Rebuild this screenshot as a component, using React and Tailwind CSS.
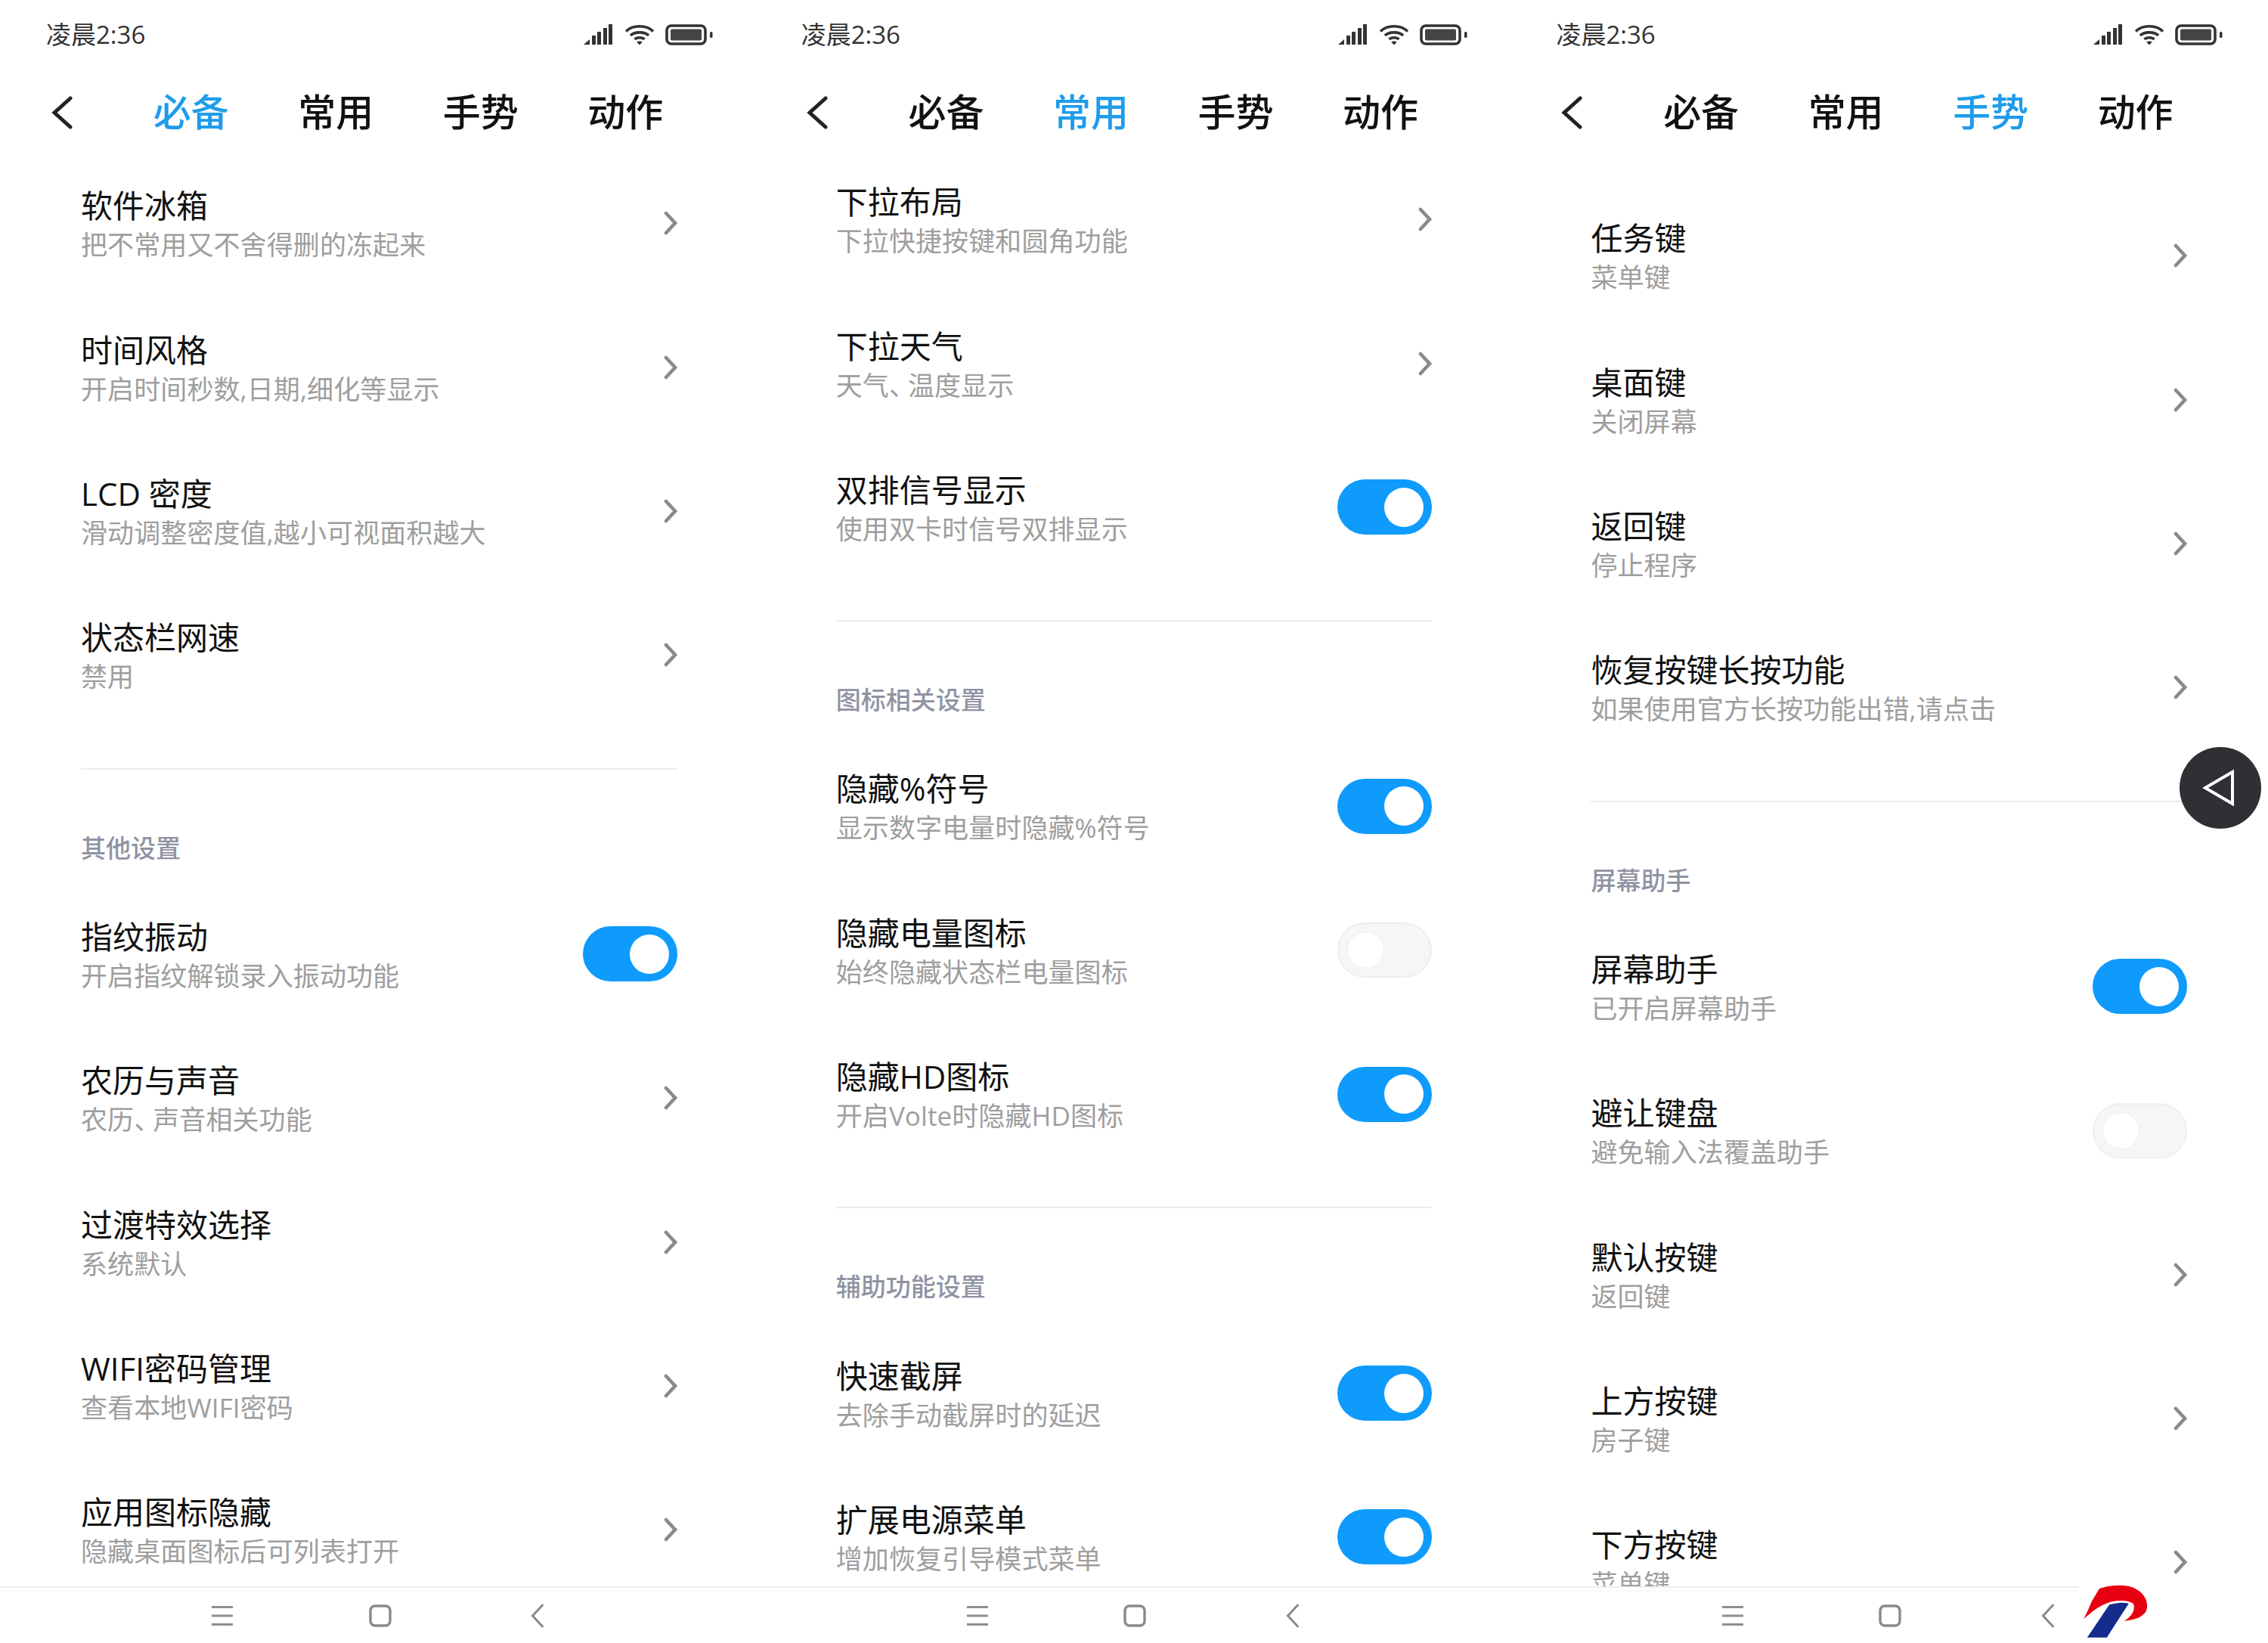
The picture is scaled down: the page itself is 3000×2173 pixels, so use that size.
const FONT = "font-['Open_Sans','Noto_Sans_CJK_SC','Noto_Sans',sans-serif]";

function Signal() {
  return (
    <svg width="40" height="28" viewBox="0 0 40 28" className="text-[#333]" fill="currentColor">
      <path d="M0 27 L8 20 V27 Z" />
      <rect x="11" y="15" width="5" height="12" />
      <rect x="18" y="10" width="5" height="17" />
      <rect x="26" y="5" width="5" height="22" />
      <rect x="33" y="0" width="5" height="27" />
    </svg>
  );
}
function Wifi() {
  return (
    <svg width="40" height="28" viewBox="0 0 40 28" fill="none" stroke="#333" strokeWidth="3.6" className="ml-[14px]">
      <path d="M2 9.5 C11 0.5 29 0.5 38 9.5" />
      <path d="M8 15 C13 9.5 27 9.5 32 15" />
      <path d="M13.5 20 C16.5 17 23.5 17 26.5 20" />
      <path d="M20 27.5 L16.2 23.5 C18 22 22 22 23.8 23.5 Z" fill="#333" stroke="none" />
    </svg>
  );
}
function Battery() {
  return (
    <svg width="63" height="28" viewBox="0 0 63 28" className="ml-[14px]">
      <rect x="2" y="2" width="51" height="24" rx="6" fill="none" stroke="#333" strokeWidth="3.6" />
      <rect x="7" y="6.5" width="41" height="15" rx="2" fill="#444" />
      <rect x="59" y="10" width="3.5" height="8" rx="1.5" fill="#333" />
    </svg>
  );
}

function Chevron() {
  return (
    <svg width="18" height="32" viewBox="0 0 18 32" fill="none" stroke="#8a8a8a" strokeWidth="4.6" strokeLinecap="round" strokeLinejoin="miter">
      <path d="M3 3 L15 16 L3 29" />
    </svg>
  );
}

function Toggle({ on }) {
  if (on) {
    return (
      <div className="w-[125px] h-[73px] rounded-full bg-[#0f9bfb] flex items-center justify-end pr-[11px]">
        <div className="w-[52px] h-[52px] rounded-full bg-white" />
      </div>
    );
  }
  return (
    <div className="w-[125px] h-[73px] rounded-full bg-[#f6f6f6] border-2 border-[#eeeeee] flex items-center pl-[11px]">
      <div className="w-[49px] h-[49px] rounded-full bg-white border border-[#eeeeee]" />
    </div>
  );
}

function Row({ title, sub, toggle }) {
  return (
    <div className="h-[190.4px] shrink-0 pl-[107px] pr-[103px] flex items-center justify-between">
      <div className="flex flex-col mt-[6px]">
        <div className="text-[42px] leading-[52px] text-[#111]">{title}</div>
        <div className="text-[35px] leading-[52px] text-[#9e9e9e] tracking-[0.1px]">{sub}</div>
      </div>
      {toggle === undefined ? <Chevron /> : <Toggle on={toggle} />}
    </div>
  );
}

function Section({ title, children }) {
  return (
    <>
      <div className="h-[2px] mt-[54px] ml-[107px] mr-[103px] bg-[#ececec] shrink-0" />
      <div className="h-[149px] pt-[80px] pl-[107px] text-[33px] leading-[48px] font-medium text-[#8f93a3] shrink-0">{title}</div>
      {children}
    </>
  );
}

function Phone({ active, offset, children }) {
  const tabs = ["必备", "常用", "手势", "动作"];
  return (
    <div className="w-[998.7px] h-[2173px] shrink-0 flex flex-col bg-white">
      <div className="h-[100px] shrink-0 pl-[61px] pr-[56px] pb-[8px] flex items-center justify-between">
        <span className="text-[33px] leading-[40px] text-[#333]">凌晨2:36</span>
        <div className="flex items-center">
          <Signal />
          <Wifi />
          <Battery />
        </div>
      </div>
      <div className="h-[98px] shrink-0 pl-[68px] flex items-center">
        <svg width="28" height="44" viewBox="0 0 28 44" fill="none" stroke="#222" strokeWidth="5" strokeLinecap="round" className="mr-[61px]">
          <path d="M25 3 L4 22 L25 41" />
        </svg>
        {tabs.map((t) => (
          <div key={t} className={`w-[191.5px] text-center text-[50px] leading-[60px] font-medium -mt-[2px] ${t === active ? "text-[#1f9cea]" : "text-[#111]"}`}>
            {t}
          </div>
        ))}
      </div>
      <div className="flex-1 min-h-0 overflow-hidden">
        <div className={`flex flex-col ${offset}`}>{children}</div>
      </div>
      <div className="h-[75px] shrink-0 border-t-2 border-[#eeeeee] relative">
        <div className="h-[2px] mt-[3px] bg-[#f8f8f8]" />
        <div className="absolute inset-0 pl-[190px] flex items-center">
          <div className="w-[208.5px] flex justify-center">
            <svg width="30" height="28" viewBox="0 0 30 28" stroke="#8f8f8f" strokeWidth="3" fill="none">
              <path d="M1 2.5 H29 M1 14 H29 M1 25.5 H29" />
            </svg>
          </div>
          <div className="w-[208.5px] flex justify-center">
            <svg width="30" height="30" viewBox="0 0 30 30" fill="none" stroke="#8a8a8a" strokeWidth="3.4">
              <rect x="2" y="2" width="26" height="26" rx="6" />
            </svg>
          </div>
          <div className="w-[208.5px] flex justify-center">
            <svg width="18" height="32" viewBox="0 0 18 32" fill="none" stroke="#8a8a8a" strokeWidth="3" strokeLinecap="round">
              <path d="M15.5 2 L2.5 16 L15.5 30" />
            </svg>
          </div>
        </div>
      </div>
    </div>
  );
}

const Dun = () => <span className="tracking-[-10px]">、</span>;

export default function App() {
  return (
    <div className={`relative w-[3000px] h-[2173px] overflow-hidden bg-white flex ${FONT}`}>
      <Phone active="必备" offset="pt-[2px]">
        <Row title="软件冰箱" sub="把不常用又不舍得删的冻起来" />
        <Row title="时间风格" sub="开启时间秒数,日期,细化等显示" />
        <Row title="LCD 密度" sub="滑动调整密度值,越小可视面积越大" />
        <Row title="状态栏网速" sub="禁用" />
        <Section title="其他设置">
          <Row title="指纹振动" sub="开启指纹解锁录入振动功能" toggle={true} />
          <Row title="农历与声音" sub={<>农历<Dun />声音相关功能</>} />
          <Row title="过渡特效选择" sub="系统默认" />
          <Row title="WIFI密码管理" sub="查看本地WIFI密码" />
          <Row title="应用图标隐藏" sub="隐藏桌面图标后可列表打开" />
        </Section>
      </Phone>
      <Phone active="常用" offset="-mt-[3px]">
        <Row title="下拉布局" sub="下拉快捷按键和圆角功能" />
        <Row title="下拉天气" sub={<>天气<Dun />温度显示</>} />
        <Row title="双排信号显示" sub="使用双卡时信号双排显示" toggle={true} />
        <Section title="图标相关设置">
          <Row title="隐藏%符号" sub="显示数字电量时隐藏%符号" toggle={true} />
          <Row title="隐藏电量图标" sub="始终隐藏状态栏电量图标" toggle={false} />
          <Row title="隐藏HD图标" sub="开启Volte时隐藏HD图标" toggle={true} />
        </Section>
        <Section title="辅助功能设置">
          <Row title="快速截屏" sub="去除手动截屏时的延迟" toggle={true} />
          <Row title="扩展电源菜单" sub="增加恢复引导模式菜单" toggle={true} />
        </Section>
      </Phone>
      <Phone active="手势" offset="pt-[45px]">
        <Row title="任务键" sub="菜单键" />
        <Row title="桌面键" sub="关闭屏幕" />
        <Row title="返回键" sub="停止程序" />
        <Row title="恢复按键长按功能" sub="如果使用官方长按功能出错,请点击" />
        <Section title="屏幕助手">
          <Row title="屏幕助手" sub="已开启屏幕助手" toggle={true} />
          <Row title="避让键盘" sub="避免输入法覆盖助手" toggle={false} />
          <Row title="默认按键" sub="返回键" />
          <Row title="上方按键" sub="房子键" />
          <Row title="下方按键" sub="菜单键" />
        </Section>
      </Phone>
      <div className="absolute left-[2883px] top-[988px] w-[108px] h-[108px] rounded-full bg-[#2f2f34] flex items-center justify-center">
        <svg width="48" height="52" viewBox="0 0 48 52" fill="none" stroke="#fff" strokeWidth="4" className="-ml-[3px]">
          <path d="M5 26 L41 5 V47 Z" />
        </svg>
      </div>
      <div className="absolute left-[2750px] top-[2093px] w-[250px] h-[80px] bg-white">
        <svg width="97" height="80" viewBox="750 430 290 240">
          <path fill="#e60012" d="M768 575 L785 540 L800 505 L830 455 C870 440 930 435 965 450 C1010 470 1030 510 1015 545 C1000 570 965 580 930 582 C960 565 975 535 965 515 C950 500 900 498 865 510 C825 525 795 550 768 575 Z" />
          <path fill="#152c8c" d="M870 518 C900 510 925 508 947 513 L860 648 L782 648 Z" />
        </svg>
      </div>
    </div>
  );
}
